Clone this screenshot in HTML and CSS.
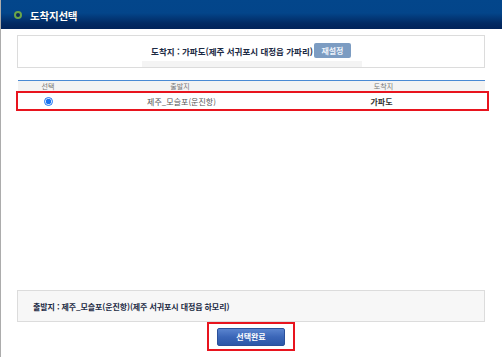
FILE: index.html
```html
<!DOCTYPE html>
<html lang="ko">
<head>
<meta charset="utf-8">
<title>도착지선택</title>
<link rel="stylesheet" href="styles.css">
</head>
<body>
<div class="page">
  <div class="header">
    <span class="ring"></span>
    <span class="title">도착지선택</span>
  </div>
  <div class="content">
    <div class="dest-box">
      <div class="dest-line">
        <span class="dest-text">도착지 : 가파도(제주 서귀포시 대정읍 가파리)</span>
        <span class="reset-btn">재설정</span>
      </div>
      <div class="strip"></div>
    </div>
    <div class="table">
      <div class="thead">
        <span class="c1">선택</span>
        <span class="c2">출발지</span>
        <span class="c3">도착지</span>
      </div>
      <div class="row-mark">
        <span class="c1"><input type="radio" name="sel" checked class="radio"></span>
        <span class="c2 from">제주_모슬포(운진항)</span>
        <span class="c3 to">가파도</span>
      </div>
    </div>
    <div class="bottom">
      <div class="origin-box">출발지 : 제주_모슬포(운진항)(제주 서귀포시 대정읍 하모리)</div>
      <div class="btn-mark">
        <span class="done-btn">선택완료</span>
      </div>
    </div>
  </div>
</div>
</body>
</html>
```

FILE: styles.css
```css
html, body {
  margin: 0;
  padding: 0;
  background: #fff;
}
body {
  font-family: "Noto Sans CJK KR", "Noto Sans", sans-serif;
}
.page {
  width: 502px;
  height: 357px;
  box-sizing: border-box;
  border-left: 1px solid #acacac;
  display: flex;
  flex-direction: column;
}
.header {
  height: 29px;
  flex: none;
  background: linear-gradient(to bottom, #03468b 0%, #03458a 45%, #022a63 80%, #01235a 100%);
  display: flex;
  align-items: center;
  padding-left: 13px;
}
.ring {
  width: 4px;
  height: 4px;
  border-radius: 50%;
  border: 2px solid #6aa64a;
  background: #0a2a5a;
  margin-right: 8px;
}
.title {
  color: #fff;
  font-weight: bold;
  font-size: 10.5px;
  letter-spacing: -0.2px;
  text-shadow: 0 0 1px rgba(0,0,0,0.4);
  margin-top: 1px;
}
.content {
  flex: 1;
  display: flex;
  flex-direction: column;
  padding: 0 17px 0 16px;
}
.dest-box {
  margin-top: 6px;
  height: 33px;
  box-sizing: border-box;
  border: 1px solid #dcdcdc;
  display: flex;
  flex-direction: column;
  align-items: center;
}
.dest-line {
  display: flex;
  align-items: center;
  margin-top: 7px;
  height: 15px;
}
.dest-text {
  font-size: 8.5px;
  font-weight: bold;
  color: #1c2a44;
  letter-spacing: 0;
}
.reset-btn {
  display: inline-flex;
  align-items: center;
  justify-content: center;
  width: 37px;
  height: 15px;
  margin-left: 1px;
  background: #7c9cc2;
  border-radius: 2px;
  color: #eef3fa;
  font-size: 8px;
  font-weight: bold;
}
.strip {
  margin-top: 3px;
  margin-left: 2px;
  width: 220px;
  height: 6px;
  background: #f4f4f4;
}
.table {
  margin-top: 12px;
  margin-left: 1px;
  border-top: 1px solid #4a8ad4;
}
.thead, .row-mark {
  display: grid;
  grid-template-columns: 60px 204px 1fr;
  align-items: center;
}
.thead {
  height: 10px;
  background: #f3f3f3;
  font-size: 7px;
  color: #777;
  line-height: 10px;
}
.c1, .c2, .c3 {
  text-align: center;
  display: flex;
  justify-content: center;
  align-items: center;
}
.row-mark {
  height: 20px;
  box-sizing: border-box;
  border: 2px solid #e8141e;
  margin-left: -2px;
  margin-right: -4px;
  grid-template-columns: 60px 204px 1fr;
  font-size: 8px;
}
.radio {
  width: 9px;
  height: 9px;
  margin: 1px 0 0 0;
  accent-color: #1a73f0;
}
.from {
  color: #555;
  padding-left: 3px;
}
.to {
  color: #333;
  font-weight: bold;
  padding-right: 6px;
}
.bottom {
  margin-top: auto;
  margin-bottom: 6px;
  display: flex;
  flex-direction: column;
  align-items: center;
}
.origin-box {
  align-self: stretch;
  height: 32px;
  box-sizing: border-box;
  border: 1px solid #dcdcdc;
  background: #f7f7f7;
  display: flex;
  align-items: center;
  padding-left: 15px;
  font-size: 8px;
  font-weight: bold;
  color: #1c2a44;
  letter-spacing: -0.1px;
}
.btn-mark {
  width: 88px;
  height: 29px;
  box-sizing: border-box;
  border: 2px solid #e8141e;
  display: flex;
  align-items: center;
  justify-content: center;
}
.done-btn {
  width: 68px;
  height: 18px;
  box-sizing: border-box;
  border: 1px solid #2b509a;
  border-radius: 2px;
  background: linear-gradient(to bottom, #5a84cf 0%, #3b66b8 50%, #2c57a7 100%);
  color: #fff;
  font-size: 8px;
  font-weight: bold;
  display: flex;
  align-items: center;
  justify-content: center;
}
```
